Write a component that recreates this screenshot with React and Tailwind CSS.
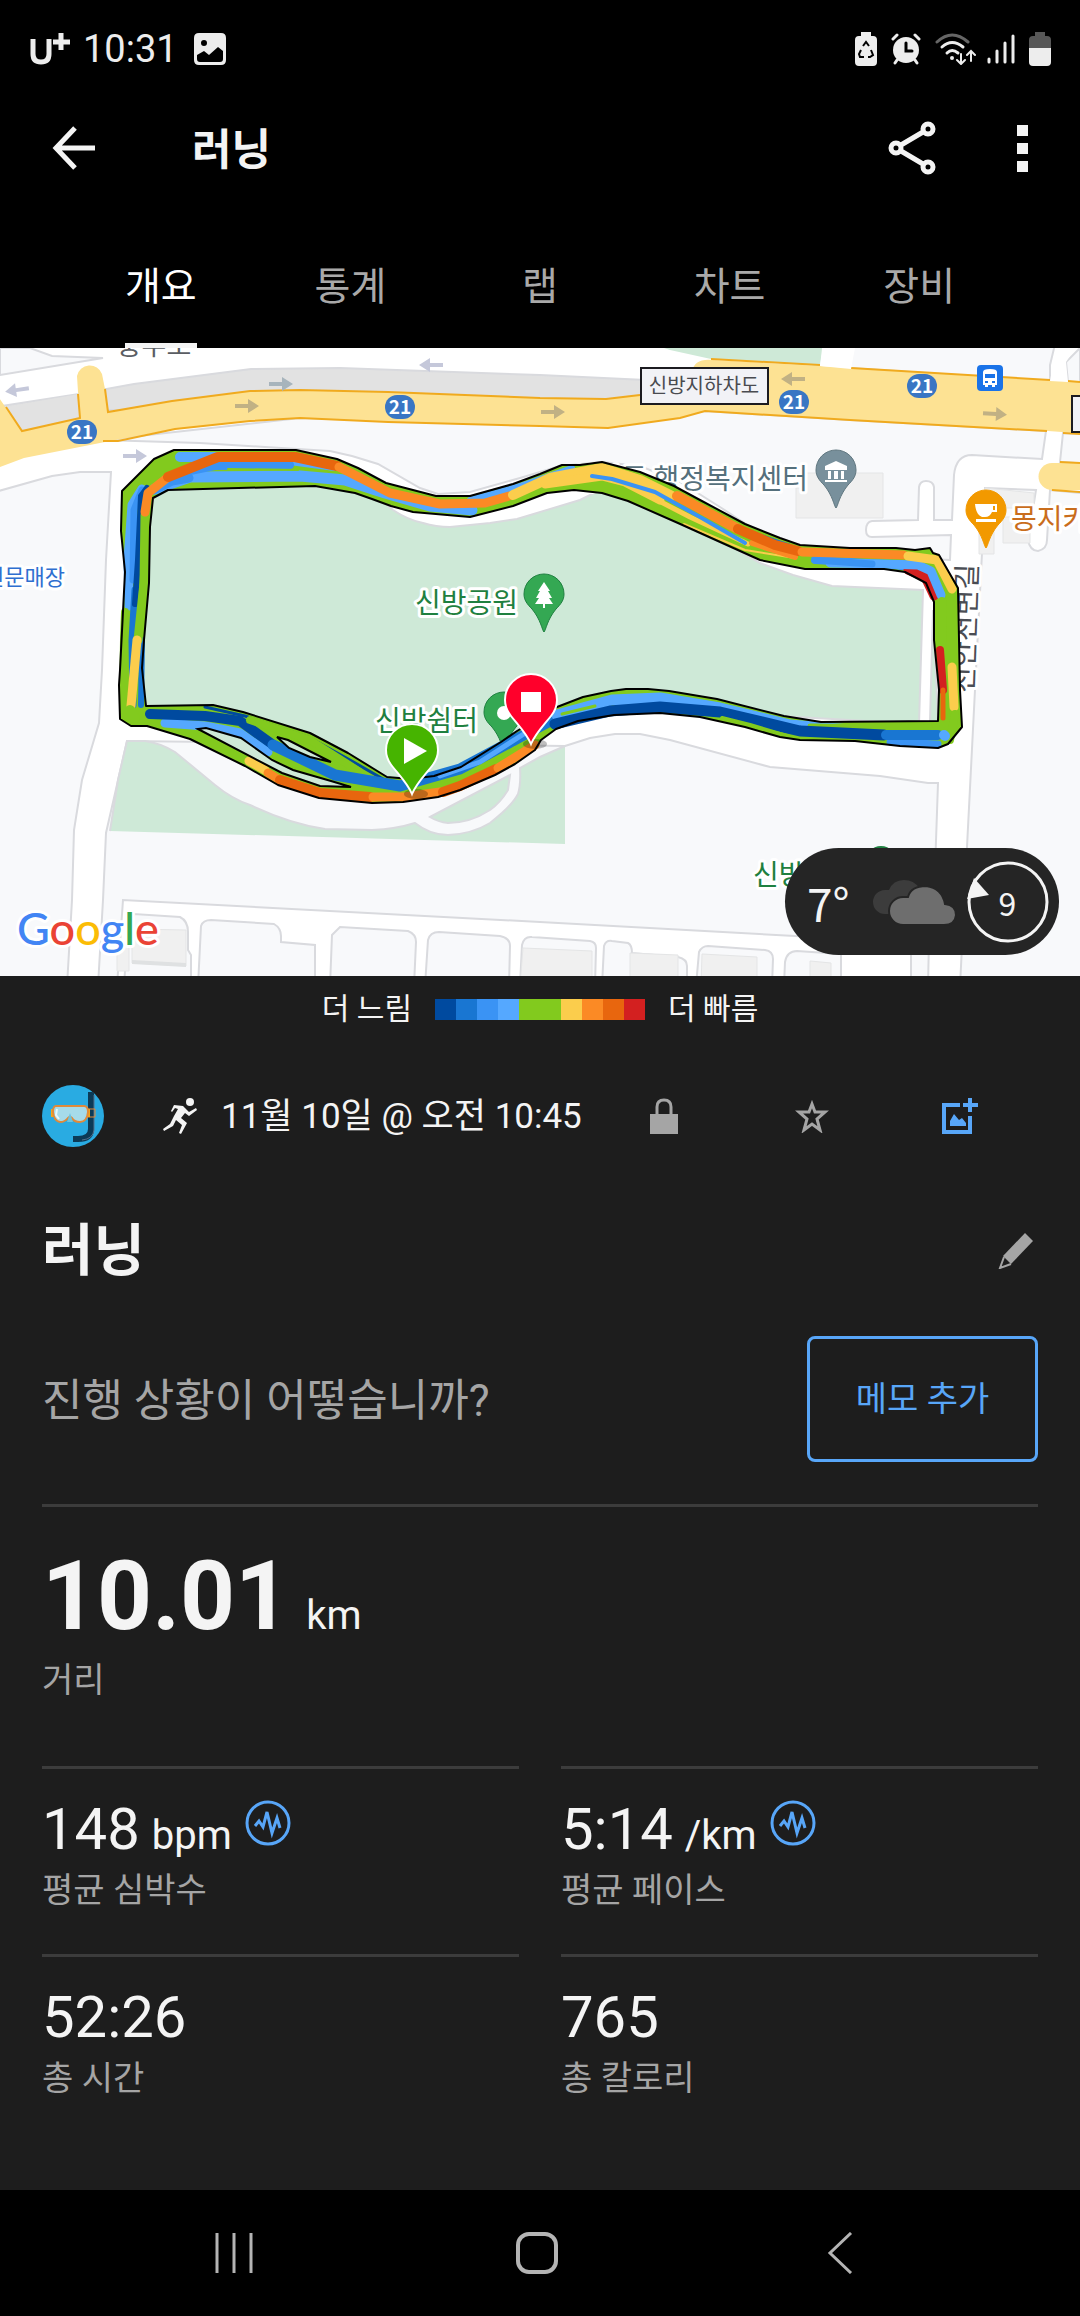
import React, { useState } from "react";

const TABS = ["개요", "통계", "랩", "차트", "장비"];

const PACE_COLORS = [
  "bg-[#004a9f]",
  "bg-[#1976d2]",
  "bg-[#3a93f4]",
  "bg-[#55a8ff]",
  "bg-[#82ca1e]",
  "bg-[#82ca1e]",
  "bg-[#fbcd4c]",
  "bg-[#fb8a25]",
  "bg-[#e8660e]",
  "bg-[#d32020]",
];

const STATS = [
  { value: "148", unit: "bpm", label: "평균 심박수", chart: true },
  { value: "5:14", unit: "/km", label: "평균 페이스", chart: true },
  { value: "52:26", label: "총 시간" },
  { value: "765", label: "총 칼로리" },
];

const NAVY = "#004a9f";
const BLUE = "#1976d2";
const MID = "#3a93f4";
const LIGHT = "#55a8ff";
const GREEN = "#82ca1e";
const YELLOW = "#fbcd4c";
const ORANGE = "#fb8a25";
const DEEP = "#e8660e";
const RED = "#d32020";

// outer edge of the lap, then the inner edge
const ROUTE_SHAPE =
  "M119 685L120 719L131 726H147L190 739L245 766L278 785L319 798L372 803L403 802L438 797L460 790L495 775L515 764L535 750L541 740L556 729L578 721L614 715L660 713L700 717L745 727L780 737L800 740L855 741L900 746L938 748L948 744L962 727L960 690L958 588L939 555L933 553L930 548L915 550L896 548H850L800 545L780 538L745 524L700 500L674 486L640 472L602 462L580 465H562L540 474L513 484L470 496H436L386 483L358 468L337 459L296 450H174L154 459L122 491L121 531L125 572L120 670Z" +
  "M142 668L146 706L213 705L243 712L310 733L348 753L387 777L410 779L434 776L461 767L501 742L517 731L557 707L583 697L611 691L626 689H648L669 691L717 699L784 716L821 722L938 721L939 690L934 640L934 602L926 583L905 572L884 569H805L760 560L678 523L628 501L602 493L574 490L547 493L513 506L470 517L413 512L391 506L372 499L355 493L315 486L168 490L153 498L150 527L149 583L144 640Z";

const SEGMENTS = [
  [LIGHT, 10, "180,457 215,457 290,460 335,466"],
  [LIGHT, 11, "155,489 190,477 300,476 345,480 385,493 430,506 472,510"],
  [MID, 9, "154,490 172,481 189,478"],
  [MID, 8, "180,473 215,466 290,465"],
  [GREEN, 2, "228,469 298,470"],
  [LIGHT, 6, "470,500 520,486 572,468"],
  [GREEN, 5, "480,508 520,497"],
  [LIGHT, 9, "129,606 128,560 132,505 142,489"],
  [MID, 7, "133,580 134,510 142,490"],
  [BLUE, 7, "133,705 132,640 135,590"],
  [NAVY, 6, "135,604 138,560 141,496 147,488"],
  [BLUE, 6, "142,640 141,705"],
  [GREEN, 9, "145,515 144,583 138,640"],
  [GREEN, 8, "125,612 124,640 123,710"],
  [YELLOW, 9, "137,640 131,706"],
  [GREEN, 10, "130,710 135,718"],
  [ORANGE, 9, "145,512 148,493 167,478"],
  [DEEP, 10, "168,477 218,457 295,457 337,466"],
  [ORANGE, 9, "339,467 390,493 440,504 485,503 509,496"],
  [YELLOW, 10, "513,495 550,478 602,468 640,480 672,496"],
  [YELLOW, 9, "545,484 602,476 625,482 660,500"],
  [YELLOW, 5, "630,486 690,517 748,544"],
  [MID, 4, "592,476 612,479 655,492 700,517 745,543"],
  [BLUE, 4, "735,527 790,546"],
  [ORANGE, 10, "677,496 738,529"],
  [YELLOW, 2, "684,524 745,550 795,558"],
  [ORANGE, 6, "752,543 795,557"],
  [DEEP, 10, "738,529 775,545 798,551"],
  [MID, 8, "815,560 885,564 918,568"],
  [RED, 9, "908,570 925,577 934,596"],
  [LIGHT, 9, "830,563 885,564 918,565 931,571 941,595"],
  [MID, 7, "815,560 872,564"],
  [ORANGE, 9, "802,552 904,555"],
  [YELLOW, 9, "908,556 937,560 952,589"],
  [GREEN, 10, "942,602 941,644"],
  [RED, 8, "940,650 943,690"],
  [DEEP, 5, "943,690 943,718"],
  [GREEN, 10, "951,602 952,662"],
  [YELLOW, 9, "952,667 954,707"],
  [GREEN, 8, "955,714 950,740"],
  [MID, 7, "890,742 938,744"],
  [LIGHT, 9, "165,723 205,726 240,733 268,752"],
  [NAVY, 10, "150,714 205,716 240,721 272,744"],
  [NAVY, 3, "205,707 245,716 310,738 350,760 390,783"],
  [GREEN, 8, "250,720 310,740 360,772"],
  [BLUE, 11, "273,745 335,775 400,786 460,769 520,737 556,718"],
  [LIGHT, 5, "440,776 480,762 530,730"],
  [GREEN, 2, "445,783 480,770 515,747"],
  [YELLOW, 9, "249,761 265,770"],
  [ORANGE, 9, "268,773 278,779"],
  [DEEP, 10, "280,780 320,793 370,797"],
  [ORANGE, 9, "373,797 405,797 440,792"],
  [DEEP, 10, "443,792 460,786 496,769"],
  [ORANGE, 9, "498,768 535,745"],
  [LIGHT, 11, "557,715 612,700 660,698 720,708 790,725 850,730"],
  [GREEN, 3, "562,714 595,706"],
  [GREEN, 5, "810,726 930,727"],
  [NAVY, 11, "555,724 610,711 660,707 720,712 800,731 884,735"],
  [GREEN, 4, "722,718 750,725 790,737"],
  [BLUE, 10, "886,735 938,735"],
  [LIGHT, 10, "944,735 945,736"],
];

const BLOCKS = [
  "M0 348H30L52 356L103 358L0 375Z",
  "M820 340H1056L1050 365V381L850 368L848 340Z",
  "M1068 382L1066 362L1080 348V384Z",
  "M103 440L200 443L265 447L330 451L352 456L378 464L420 488L438 494L470 492L520 478L560 466L602 462L640 466L680 482L720 507L755 530L800 549L850 555L950 560L951 535L872 537Q866 537 866 530Q866 522 872 521L918 520L919 487Q920 481 926 481Q933 481 934 487V520L952 520L954 475Q956 455 972 455L1042 459L1046 431L850 420L705 411L600 426L300 418Z",
  "M985 488L1036 490L1028 540Q1030 551 1038 551Q1047 549 1047 540L1050 490L1090 494V986H960L967 847L976 670L982 553Z",
  "M1063 433L1090 434V464L1060 462Z",
  "M-5 492L52 476L80 472H111L106 560L102 670L99 723L82 780L74 830L72 900L67 986H-5Z",
  "M565 746L590 738L615 734H640L670 740L770 767L880 776L928 783H938L935 870L930 943L795 936L540 922L123 900L117 986H98L103 900L106 833L127 741Z",
  "M124 986L127 940L134 914L180 917Q188 921 188 932V950L191 955V986Z",
  "M198 986L201 926Q203 920 211 920L274 924Q281 928 281 936V942L315 945V986Z",
  "M330 986L332 935L340 927L408 931Q416 934 416 942L414 986Z",
  "M425 986L428 940Q430 932 439 932L500 936Q510 938 510 946L509 986Z",
  "M520 986L522 945Q524 936 532 937L590 941Q596 942 596 948L595 986Z",
  "M602 986L604 946Q606 940 612 941L628 943Q632 945 632 953L678 957Q687 959 687 966V986Z",
  "M696 986L699 952Q702 946 708 946L765 950Q773 951 773 959L772 986Z",
  "M784 986L785 962Q787 951 797 951L841 954V986Z",
  "M911 986V940H929L928 986Z",
];

const BUILDINGS = [
  "M802 473H883V518H796V488H802Z",
  "M985 488L1034 493V508H1003V517H985Z",
  "M1003 517H1030V543H1003Z",
  "M979 530H994V554H979Z",
  "M132 929L186 930V966L132 963Z",
  "M117 945H129V971H117Z",
  "M523 948L592 951V986H520Z",
  "M630 953L678 955V986H630Z",
  "M702 954L757 957V986H701Z",
  "M810 961L831 963V986H810Z",
];

// x, y of the middle, direction, colour
const ARROWS = [
  [17, 390, 172, "#c5c8da"],
  [431, 365, 180, "#c5c8da"],
  [281, 384, 0, "#a7b4bc"],
  [247, 406, 0, "#c1b184"],
  [135, 456, 0, "#c5c8da"],
  [553, 412, 0, "#c1b184"],
  [793, 379, 180, "#c1b184"],
  [995, 414, 3, "#c1b184"],
];

const SHIELDS = [
  [82, 432],
  [400, 407],
  [794, 402],
  [922, 386],
];

const Pin = ({ x, y, fill, stroke, children }) => (
  <g transform={`translate(${x} ${y})`}>
    <path
      d="M0 36C-2 34 -3 24 -12 13C-17 8 -20 4 -20 -2A20 20 0 0 1 20 -2C20 4 17 8 12 13C3 24 2 34 0 36Z"
      fill={fill}
      stroke={stroke}
      strokeWidth="1"
    />
    {children}
  </g>
);

const RoutePin = ({ x, y, fill, children }) => (
  <g transform={`translate(${x} ${y})`}>
    <ellipse cx="4" cy="44" rx="12" ry="5" fill="#000" opacity="0.25" />
    <path
      d="M0 44C-4 34 -13 25 -20 16C-24 11 -26 6 -26 0A26 26 0 0 1 26 0C26 6 24 11 20 16C13 25 4 34 0 44Z"
      fill={fill}
      stroke="#fff"
      strokeWidth="2"
    />
    {children}
  </g>
);

const RouteMap = () => (
  <svg
    viewBox="0 348 1080 628"
    preserveAspectRatio="xMidYMid slice"
    className="block h-[628px] w-full bg-white [font-family:'Noto_Sans_CJK_KR',sans-serif]"
    role="img"
    aria-label="러닝 경로 지도"
  >
    <path d="M0 348H1080V976H0Z" fill="#fff" />
    <path d="M640 340H823L820 366L711 359L670 350Z" fill="#cee9d7" />
    <g fill="#f8f9fb" stroke="#d9dade" strokeWidth="2">
      {BLOCKS.map((d) => (
        <path key={d} d={d} />
      ))}
    </g>
    <g fill="#f0f0f0" stroke="#e4e5e6" strokeWidth="1">
      {BUILDINGS.map((d) => (
        <path key={d} d={d} />
      ))}
    </g>
    <path d="M132 960L186 963V967L132 964Z" fill="#dfe1e2" />

    {/* underpass and main road */}
    <path
      d="M-5 407L79 394L134 384L251 369L340 368L540 375L645 380V410H-5Z"
      fill="#e2e2e2"
      stroke="#d9dade"
      strokeWidth="2"
    />
    <path d="M6 407L79 394L80 420L22 432Z" fill="#e2e2e2" />
    <path
      d="M-5 392L22 431L80 418L78 392L77 376A13 13 0 0 1 102 374L105 389L108 412L172 401L250 391L300 390L388 392L540 398L606 399L640 395L692 380V372Q694 358 713 360L820 366L850 368L1050 380L1090 383V434L1048 431L850 420L705 411L680 418L608 428L540 426L388 422L300 418L250 421L175 429L110 441L24 458L-5 469Z"
      fill="#fde293"
    />
    <path
      d="M6 407L22 431L80 418L78 394M105 389L108 412L172 401L250 391L300 390L388 392L540 398L606 399L640 395M711 359L820 365M851 368L1050 380M1068 381L1080 382M103 441H118L175 429L250 421L300 418L388 422L540 426L608 428L680 418L705 411L850 420L1047 431M1063 433L1080 434"
      fill="none"
      stroke="#f0aa1e"
      strokeWidth="2"
    />
    <path d="M823 348L820 366L851 369L855 348ZM1056 348L1050 381L1068 382L1066 362L1075 348Z" fill="#fff" />
    <path d="M1090 463H1052A13 13 0 0 0 1052 490H1090Z" fill="#fde293" />
    <path d="M1060 462L1080 463M1052 490L1080 492" stroke="#f0aa1e" strokeWidth="2" />

    {/* park */}
    <g fill="#cee9d7" stroke="#d9dade" strokeWidth="2">
      <path d="M143 490L310 482L375 495L393 510Q408 520 423 523Q436 527 450 527L490 523L517 519L580 500L600 490L650 505L720 540L760 563L793 575L832 586L923 590L919 724L780 716L660 690H620L550 712L510 740L430 780L380 778L240 715L143 708Z" />
      <path d="M933 610L938 722H930Z" />
      <path d="M430 817L510 775L508 790Q500 803 490 810Q470 823 448 823Q438 822 430 817Z" />
    </g>
    <path
      d="M110 831L118 780L127 741H145Q160 743 175 752L215 785Q232 799 250 805Q290 824 325 829L372 830Q396 829 415 823Q430 835 448 835Q472 834 490 823Q512 806 518 794Q521 784 520 768L540 757L565 746V844Z"
      fill="#cee9d7"
    />
    <path
      d="M110 831L118 780L127 741H145Q160 743 175 752L215 785Q232 799 250 805Q290 824 325 829L372 830Q396 829 415 823Q430 835 448 835Q472 834 490 823Q512 806 518 794Q521 784 520 768L540 757L565 746"
      fill="none"
      stroke="#d9dade"
      strokeWidth="2"
    />

    {ARROWS.map(([x, y, angle, color]) => (
      <path
        key={x}
        transform={`translate(${x} ${y}) rotate(${angle})`}
        d="M-12 -2H1V-7L12 0L1 7V2H-12Z"
        fill={color}
      />
    ))}
    {SHIELDS.map(([x, y]) => (
      <g key={x}>
        <rect x={x - 15} y={y - 12} width="30" height="24" rx="12" fill="#3976c4" />
        <text x={x} y={y + 7} textAnchor="middle" fontSize="19" fontWeight="700" fill="#fff">
          21
        </text>
      </g>
    ))}
    <rect x="641" y="368" width="127" height="36" fill="#f2f2f6" stroke="#1c1b20" strokeWidth="2" />
    <text x="704" y="393" textAnchor="middle" fontSize="20" fill="#4a4b50">
      신방지하차도
    </text>
    <rect x="1072" y="396" width="30" height="36" fill="#f2f2f6" stroke="#1c1b20" strokeWidth="2" />
    <rect x="977" y="365" width="26" height="26" rx="4" fill="#1a73e8" />
    <path
      d="M983 385V372Q983 369 990 369Q997 369 997 372V385H995V387H992V385H988V387H985V385ZM985 374V378H995V374ZM985 381V383H988V381ZM992 381V383H995V381Z"
      fill="#fff"
      fillRule="evenodd"
    />

    <g strokeLinejoin="round" strokeWidth="6" stroke="#fff" paintOrder="stroke">
      <text x="154" y="355" textAnchor="middle" fontSize="27" fill="#5a5d63">
        충무로
      </text>
      <text x="65" y="585" textAnchor="end" fontSize="22" fill="#2f6fd0">
        전문매장
      </text>
      <text x="808" y="489" textAnchor="end" fontSize="28" fill="#55707c">
        신방동 행정복지센터
      </text>
      <text x="1011" y="529" fontSize="28" fill="#c96d1c">
        몽지카페
      </text>
      <text x="415" y="613" fontSize="28" fill="#1f8040">
        신방공원
      </text>
      <text x="375" y="731" fontSize="28" fill="#1f8040">
        신방쉼터
      </text>
      <text x="753" y="885" fontSize="28" fill="#1f8040">
        신방
      </text>
      <text transform="translate(973 693) rotate(-88)" fontSize="28" fill="#4a4d54">
        천안천변길
      </text>
    </g>
    <circle cx="881" cy="862" r="16" fill="#1f8040" />

    <Pin x="836" y="472" fill="#78909c" stroke="#607780">
      <path d="M-11 -6L0 -11L11 -6V-2H-11ZM-8 -1H-5V7H-8ZM-2 -1H2V7H-2ZM5 -1H8V7H5ZM-11 8H11V10H-11Z" fill="#fff" />
    </Pin>
    <Pin x="986" y="512" fill="#f29900" stroke="#f29900">
      <path d="M-11 -8H11V0H6Q4 5 -1 5H-4Q-10 3 -11 -8ZM7 -6V-2H9V-6ZM-10 7H10V10H-10Z" fill="#fff" fillRule="evenodd" />
    </Pin>
    <Pin x="544" y="596" fill="#34a853" stroke="#1f8040">
      <path d="M0 -14L6 -5H4L8 2H5L9 8H1V12H-1V8H-9L-5 2H-8L-4 -5H-6Z" fill="#fff" />
    </Pin>
    <Pin x="504" y="714" fill="#34a853" stroke="#1f8040">
      <circle cy="-1" r="7" fill="#fff" />
    </Pin>

    {/* recorded laps */}
    <path d={ROUTE_SHAPE} fill={GREEN} fillRule="evenodd" />
    {SEGMENTS.map(([color, width, points]) => (
      <polyline
        key={points}
        points={points}
        fill="none"
        stroke={color}
        strokeWidth={width}
        strokeLinecap="round"
        strokeLinejoin="round"
      />
    ))}
    <path
      d="M198 729L206 728L241 738L272 760L293 770L331 781L351 787L320 786L282 773ZM277 737L288 740L331 762L310 757L289 748Z"
      fill="#cee9d7"
      stroke="#000"
      strokeWidth="2"
    />
    <path d={ROUTE_SHAPE} fill="none" stroke="#000" strokeWidth="2" strokeLinejoin="round" />

    <RoutePin x="531" y="700" fill="#ff002b">
      <path d="M-10 -8H10V12H-10Z" fill="#fff" />
    </RoutePin>
    <RoutePin x="412" y="750" fill="#46b400">
      <path d="M-8 -12L15 1L-8 14Z" fill="#fff" />
    </RoutePin>

    <text
      x="17"
      y="945"
      fontSize="45"
      stroke="#fff"
      strokeWidth="6"
      strokeLinejoin="round"
      paintOrder="stroke"
      className="font-medium [font-family:Lato,sans-serif]"
    >
      <tspan fill="#4285f4">G</tspan>
      <tspan fill="#ea4335">o</tspan>
      <tspan fill="#fbbc05">o</tspan>
      <tspan fill="#4285f4">g</tspan>
      <tspan fill="#34a853">l</tspan>
      <tspan fill="#ea4335">e</tspan>
    </text>
  </svg>
);

const StatusBar = () => (
  <div className="flex h-[98px] items-center px-[29px]">
    <svg viewBox="0 0 42 34" className="h-[34px] w-[42px]" fill="none" stroke="#ededed">
      <path d="M4 7V22Q4 30 12 30Q20 30 20 22V7" strokeWidth="5" />
      <path d="M24 10H41M32 1V18" strokeWidth="5" />
    </svg>
    <span className="ml-3 text-[38px] leading-none text-[#ededed]">10:31</span>
    <svg viewBox="0 0 32 32" className="ml-4 size-8" fillRule="evenodd">
      <path
        d="M5 0H27Q32 0 32 5V27Q32 32 27 32H5Q0 32 0 27V5Q0 0 5 0ZM10 7A3 3 0 1 0 10 13A3 3 0 1 0 10 7ZM3 22V26Q3 29 6 29H26Q29 29 29 26V18L24 14L15 22L10 18Z"
        fill="#ededed"
      />
    </svg>
    <div className="ml-auto flex items-center gap-[14px]">
      <svg viewBox="0 0 22 34" className="h-[34px] w-[22px]">
        <path d="M6 0H16V4H18Q22 4 22 8V30Q22 34 18 34H4Q0 34 0 30V8Q0 4 4 4H6Z" fill="#ededed" />
        <path
          d="M8 14L11 10L14 14M16 18L18 23L15 25H13M9 25H5L4 22L6 18"
          fill="none"
          stroke="#000"
          strokeWidth="2"
        />
      </svg>
      <svg viewBox="0 0 30 32" className="h-8 w-[30px]" stroke="#ededed" strokeLinecap="round">
        <circle cx="15" cy="17" r="13" fill="#ededed" stroke="none" />
        <path d="M2 6L6 2M28 6L24 2M6 27L4 30M24 27L26 30" strokeWidth="3" />
        <path d="M15 10V18H21" fill="none" stroke="#000" strokeWidth="3" />
      </svg>
      <svg viewBox="0 0 42 32" className="h-8 w-[42px]" fill="none" stroke="#ededed" strokeWidth="3" strokeLinecap="round">
        <path d="M2 9Q17 -5 33 9" stroke="#666" />
        <path d="M7 14Q17 5 28 14M12 20Q17 15 23 20" />
        <circle cx="17" cy="25" r="2" fill="#ededed" stroke="none" />
        <path d="M26 21V30M22 27L26 31L30 27M36 28V19M32 22L36 18L40 22" strokeWidth="2" />
      </svg>
      <svg viewBox="0 0 28 30" className="-ml-1 h-[30px] w-7" fill="none" stroke="#ededed" strokeWidth="3" strokeLinecap="round">
        <path d="M2 25V28M10 17V28M18 9V28M26 2V28" />
      </svg>
      <svg viewBox="0 0 22 34" className="h-[34px] w-[22px]">
        <path d="M6 0H16V4H18Q22 4 22 8V17H0V8Q0 4 4 4H6Z" fill="#575757" />
        <path d="M0 16H22V30Q22 34 18 34H4Q0 34 0 30Z" fill="#ededed" />
      </svg>
    </div>
  </div>
);

const Weather = () => (
  <div className="absolute right-[21px] bottom-[21px] flex h-[107px] w-[274px] items-center rounded-full bg-[#252525] pr-[10px] pl-[22px] text-[#f4f4f4] [font-family:'Noto_Sans_CJK_KR',sans-serif]">
    <span className="w-[66px] text-[46px] leading-none">7°</span>
    <svg viewBox="0 0 84 48" className="h-12 w-[84px]">
      <path d="M12 36A12 12 0 0 1 12 12H16Q20 2 31 2Q41 2 46 10L30 36Z" fill="#3c3c3c" />
      <path
        d="M30 47A14 14 0 0 1 30 19H35Q38 8 53 8Q69 10 72 26Q83 27 83 37Q82 47 71 47Z"
        fill="#6e6e6e"
        stroke="#252525"
        strokeWidth="2"
      />
    </svg>
    <div className="relative ml-auto flex size-[83px] items-center justify-center">
      <svg viewBox="0 0 83 83" className="absolute inset-0">
        <circle cx="42" cy="42" r="39" fill="none" stroke="#f4f4f4" strokeWidth="3" />
        <path d="M8 18L23 35L1 39Z" fill="#f4f4f4" />
      </svg>
      <span className="text-[32px] leading-none">9</span>
    </div>
  </div>
);

const ChartIcon = () => (
  <svg viewBox="0 0 46 46" className="size-[46px]" fill="none" stroke="#58a6f8">
    <circle cx="23" cy="23" r="21" strokeWidth="3" />
    <path d="M10 26L14 21L18 27L22 12L27 33L32 18L35 28" strokeWidth="3" />
  </svg>
);

const Stat = ({ value, unit, label, chart }) => (
  <div className="h-[188px] border-t-[3px] border-[#3c3c3c] pt-[31px]">
    <div className="flex h-[66px]">
      <p className="text-[58px] leading-[58px] text-[#f4f4f4]">
        {value}
        {unit && <span className="ml-3 text-[40px]">{unit}</span>}
      </p>
      {chart && (
        <button className="ml-[13px] self-start" aria-label={`${label} 차트`}>
          <ChartIcon />
        </button>
      )}
    </div>
    <p className="mt-1 text-[34px] leading-[40px] text-[#a5a5a5]">{label}</p>
  </div>
);

const App = () => {
  const [activeTab, setActiveTab] = useState("개요");

  return (
    <div className="min-h-screen bg-[#1d1d1d] text-[#f4f4f4] [font-family:Roboto,'Noto_Sans_CJK_KR',sans-serif]">
      <header className="bg-black">
        <StatusBar />
        <div className="flex h-[100px] items-center px-[52px]">
          <button aria-label="뒤로">
            <svg viewBox="0 0 44 44" className="size-11" fill="none" stroke="#f4f4f4" strokeWidth="5">
              <path d="M23 2L4 22L23 42M4 22H43" />
            </svg>
          </button>
          <h1 className="ml-24 pt-1 text-[43px] leading-none font-bold">러닝</h1>
          <button className="ml-auto" aria-label="공유">
            <svg viewBox="0 0 48 54" className="h-[54px] w-12" fill="none" stroke="#f4f4f4" strokeWidth="5">
              <circle cx="8" cy="27" r="5" />
              <circle cx="40" cy="8" r="5" />
              <circle cx="40" cy="46" r="5" />
              <path d="M13 24L35 11M13 30L35 43" />
            </svg>
          </button>
          <button className="ml-[81px] flex flex-col gap-[7px]" aria-label="더보기">
            <span className="size-[11px] bg-[#f4f4f4]" />
            <span className="size-[11px] bg-[#f4f4f4]" />
            <span className="size-[11px] bg-[#f4f4f4]" />
          </button>
        </div>
        <nav className="flex h-[150px] px-[66px]">
          {TABS.map((tab) => (
            <button
              key={tab}
              onClick={() => setActiveTab(tab)}
              className={`flex flex-1 justify-center text-[39px] leading-none ${
                activeTab === tab ? "text-white" : "text-[#a9a9a9]"
              }`}
            >
              <span
                className={`flex h-full items-end border-b-[5px] pb-9 ${
                  activeTab === tab ? "border-[#f4f4f4]" : "border-transparent"
                }`}
              >
                {tab}
              </span>
            </button>
          ))}
        </nav>
      </header>

      <section className="relative">
        <RouteMap />
        <Weather />
      </section>

      <div className="flex h-[66px] items-center justify-center gap-[23px] text-[30px] leading-none">
        <span>더 느림</span>
        <div className="flex">
          {PACE_COLORS.map((color, i) => (
            <span key={i} className={`h-[21px] w-[21px] ${color}`} />
          ))}
        </div>
        <span>더 빠름</span>
      </div>

      <main className="px-[42px]">
        <div className="flex h-[148px] items-center">
          <svg viewBox="0 0 62 62" className="size-[62px] rounded-full">
            <path d="M0 0H62V62H0Z" fill="#29abe2" />
            <path d="M49 7V44Q49 54 36 54H31" fill="none" stroke="#0c3a56" strokeWidth="6" />
            <path d="M52 10V45Q51 54 40 55" fill="none" stroke="#54708a" strokeWidth="1" />
            <path d="M45 24H53V32H45" fill="none" stroke="#e08a3a" strokeWidth="1" />
            <path d="M9 24H12V32H9ZM45 24H48V32H45Z" fill="#f2a71b" />
            <path
              d="M14 21H42Q46 21 46 27Q45 37 38 37Q32 37 30 33Q28 31 26 33Q23 37 18 37Q12 36 11 27Q11 21 14 21Z"
              fill="#a6dbea"
              stroke="#e08a3a"
              strokeWidth="2"
            />
            <path d="M25 37L28 28L31 37Z" fill="#6cc3de" />
            <path d="M15 24L14 30L17 34" fill="none" stroke="#e6f7fb" strokeWidth="2" />
          </svg>
          <svg viewBox="0 0 34 36" className="ml-[59px] h-9 w-[34px]" fill="#f4f4f4">
            <circle cx="27" cy="4" r="4" />
            <path d="M11 7L20 8L26 14L33 10L34 12L26 18L22 15L18 20L24 25L18 36L16 35L19 27L13 22L10 28L1 33L0 31L7 26L11 18L15 11L12 10L9 14L8 13Z" />
          </svg>
          <time className="ml-6 text-[35px] leading-none">11월 10일 @ 오전 10:45</time>
          <div className="mr-1 ml-auto grid w-[444px] shrink-0 grid-cols-3 justify-items-center">
            <button aria-label="비공개">
              <svg viewBox="0 0 28 36" className="h-9 w-7">
                <path d="M7 18V9Q7 2 14 2Q21 2 21 9V18" fill="none" stroke="#a5a5a5" strokeWidth="3" />
                <path d="M0 16H28V36H0Z" fill="#a5a5a5" />
              </svg>
            </button>
            <button aria-label="즐겨찾기">
              <svg viewBox="0 0 34 34" className="size-[34px]" fill="none" stroke="#a5a5a5" strokeWidth="3">
                <path d="M17 5L20 13H30L22 20L25 31L17 25L9 31L12 20L4 13H14Z" />
              </svg>
            </button>
            <button aria-label="사진 추가">
              <svg viewBox="0 0 36 36" className="size-9" fill="none" stroke="#58a6f8">
                <path d="M18 7H2V34H28V18" strokeWidth="4" />
                <path d="M21 7H36M28 0V14" strokeWidth="4" />
                <path d="M8 28V23L12 16L17 22L20 20L24 25V28Z" fill="#58a6f8" stroke="none" />
              </svg>
            </button>
          </div>
        </div>

        <div className="flex h-[146px] items-center justify-between pr-1 pb-6">
          <h2 className="text-[56px] leading-none font-bold">러닝</h2>
          <button aria-label="이름 편집">
            <svg viewBox="0 0 36 36" className="size-9">
              <path d="M27 0L35 8L13 31L5 23Z" fill="#a5a5a5" />
              <path d="M6 24L2 35L13 31" fill="none" stroke="#a5a5a5" strokeWidth="2" />
            </svg>
          </button>
        </div>

        <div className="flex h-[126px] items-center justify-between">
          <p className="pt-1 text-[44px] leading-none text-[#a5a5a5]">진행 상황이 어떻습니까?</p>
          <button className="h-full w-[231px] rounded-lg border-[3px] border-[#58a6f8] text-[34px] leading-none text-[#58a6f8]">
            메모 추가
          </button>
        </div>

        <section className="mt-[42px] h-[262px] border-t-[3px] border-[#3c3c3c] pt-[45px]">
          <p className="text-[96px] leading-[88px]">
            <span className="font-bold">10.01</span>
            <span className="ml-4 text-[40px]">km</span>
          </p>
          <p className="text-[34px] leading-[40px] text-[#a5a5a5]">거리</p>
        </section>

        <section className="grid grid-cols-2 gap-x-[42px]">
          {STATS.map((stat) => (
            <Stat key={stat.label} {...stat} />
          ))}
        </section>
      </main>

      <nav className="mt-12 grid h-[126px] grid-cols-3 place-items-center bg-black pr-[88px] pl-[82px]">
        <button aria-label="최근 앱">
          <svg viewBox="0 0 38 40" className="h-10 w-[38px]" stroke="#b4b4b4" strokeWidth="3">
            <path d="M2 0V40M19 0V40M36 0V40" />
          </svg>
        </button>
        <button aria-label="홈">
          <svg viewBox="0 0 42 42" className="size-[42px]" fill="none" stroke="#b4b4b4" strokeWidth="4">
            <rect x="2" y="2" width="38" height="38" rx="11" />
          </svg>
        </button>
        <button aria-label="이전">
          <svg viewBox="0 0 26 42" className="h-[42px] w-[26px]" fill="none" stroke="#b4b4b4" strokeWidth="3">
            <path d="M24 1L3 21L24 41" />
          </svg>
        </button>
      </nav>
    </div>
  );
};

export default App;
